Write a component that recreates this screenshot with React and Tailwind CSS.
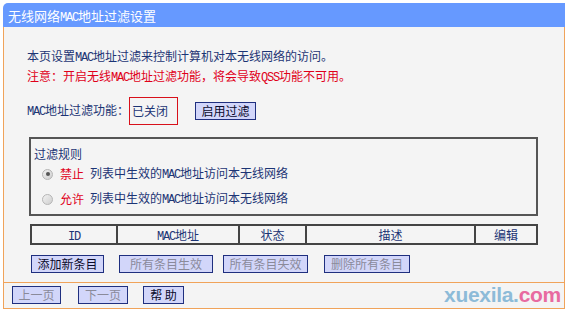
import React from 'react';

const FONT = { fontFamily: '"SimSun", "Noto Sans CJK SC", "Liberation Sans", sans-serif' };

// narrow half-width latin, like the bitmap font in the router page
function L({ children }) {
  return (
    <span
      className="text-[12px] tracking-[-1.2px]"
      style={{ fontFamily: '"Liberation Mono", "DejaVu Sans Mono", monospace' }}
    >
      {children}
    </span>
  );
}

function Btn({ children, disabled, className = '' }) {
  return (
    <button
      className={`h-[18px] shrink-0 whitespace-nowrap border border-[#1f2f7f] bg-[#d2d6fa] text-[12px] leading-[16px] ${
        disabled ? 'text-[#8a8a9a]' : 'text-[#0a0a2a]'
      } ${className}`}
    >
      {children}
    </button>
  );
}

function Radio({ checked }) {
  return (
    <span className="w-[11px] h-[11px] rounded-full border border-[#b5b5b5] bg-gradient-to-br from-[#f2f2f2] to-[#cfcfcf] flex items-center justify-center">
      {checked && <span className="w-[4px] h-[4px] rounded-full bg-[#555]" />}
    </span>
  );
}

export default function App() {
  return (
    <div className="w-[567px] h-[311px] bg-white pt-[3px] pl-[3px] relative overflow-hidden" style={FONT}>
      <div className="w-[562px]">
        {/* title */}
        <div className="h-[24px] bg-[#6699ff] rounded-tl-[5px] pl-[5px] text-white text-[13px] leading-[25px]">
          无线网络<L>MAC</L>地址过滤设置
        </div>

        {/* body */}
        <div className="h-[255px] bg-[#f4f4f4] border-x border-[#f0a35a] pt-[20px] pl-[23px] text-[12px] text-[#1c3475]">
          <div className="leading-[18px]">本页设置<L>MAC</L>地址过滤来控制计算机对本无线网络的访问。</div>
          <div className="leading-[18px] text-[#e0001a]">
            注意：开启无线<L>MAC</L>地址过滤功能，将会导致<L>QSS</L>功能不可用。
          </div>

          <div className="mt-[10px] flex items-center h-[28px]">
            <span className="leading-[18px] whitespace-nowrap shrink-0"><L>MAC</L>地址过滤功能：</span>
            <span className="h-[28px] w-[49px] shrink-0 border border-[#d8101a] pl-[2px] leading-[26px]">已关闭</span>
            <Btn className="ml-[17px] w-[61px]">启用过滤</Btn>
          </div>

          {/* rules */}
          <div className="mt-[12px] ml-[2px] w-[509px] h-[79px] border-2 border-[#555] pl-[3px] pt-[6px]">
            <div className="leading-[18px]">过滤规则</div>
            <div className="mt-[2px] flex items-center h-[18px] pl-[8px]">
              <Radio checked />
              <span className="ml-[7px] text-[#e0001a]">禁止</span>
              <span className="ml-[6px]">列表中生效的<L>MAC</L>地址访问本无线网络</span>
            </div>
            <div className="mt-[7px] flex items-center h-[18px] pl-[8px]">
              <Radio />
              <span className="ml-[7px] text-[#e0001a]">允许</span>
              <span className="ml-[6px]">列表中生效的<L>MAC</L>地址访问本无线网络</span>
            </div>
          </div>

          {/* table */}
          <div className="mt-[8px] ml-[3px] w-[508px] h-[21px] border-2 border-[#444] flex text-center leading-[17px] text-[#1c3475]">
            <div className="w-[86px] border-r-2 border-[#444]"><L>ID</L></div>
            <div className="w-[122px] border-r-2 border-[#444]"><L>MAC</L>地址</div>
            <div className="w-[67px] border-r-2 border-[#444]">状态</div>
            <div className="w-[169px] border-r-2 border-[#444]">描述</div>
            <div className="flex-1">编辑</div>
          </div>

          <div className="mt-[10px] ml-[4px] flex">
            <Btn className="w-[73px]">添加新条目</Btn>
            <Btn disabled className="ml-[15px] w-[94px]">所有条目生效</Btn>
            <Btn disabled className="ml-[10px] w-[85px]">所有条目失效</Btn>
            <Btn disabled className="ml-[16px] w-[86px]">删除所有条目</Btn>
          </div>
        </div>

        {/* footer */}
        <div className="h-[27px] bg-[#f4f4f4] border border-[#f0a35a] pl-[8px] pt-[3px] flex">
          <Btn disabled className="w-[49px]">上一页</Btn>
          <Btn disabled className="ml-[17px] w-[50px]">下一页</Btn>
          <Btn className="ml-[15px] w-[41px]">帮 助</Btn>
        </div>
      </div>

      <div
        className="absolute left-[444px] top-[282px] text-[21px] font-bold leading-[26px] tracking-[-0.3px]"
        style={{ fontFamily: '"Liberation Sans", Arial, sans-serif' }}
      >
        <span className="text-[#8dbbd8]">xuexila.</span>
        <span className="text-[#e86aa0]">com</span>
      </div>
    </div>
  );
}
